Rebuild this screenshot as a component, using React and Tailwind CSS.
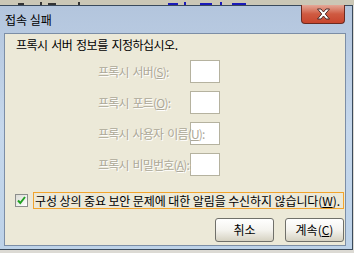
import { useState } from "react";

const font = { fontFamily: '"Noto Sans CJK KR", "Noto Sans", sans-serif' };

function ProxyRow({ label, hotkey }) {
  return (
    <div className="flex items-center h-[23px] pl-[93px]">
      <span className="relative z-10 w-[92px] shrink-0 whitespace-nowrap text-[12px] leading-[16px] tracking-[-0.8px] [word-spacing:2px] text-[#aca899] [text-shadow:1px_1px_0_#ffffff]">
        {label}(<span className="underline">{hotkey}</span>):
      </span>
      <div className="w-[30px] h-[23px] shrink-0 bg-white border border-[#b5b29f]" />
    </div>
  );
}

function App() {
  const [ignore, setIgnore] = useState(true);

  return (
    <div className="w-[354px] h-[253px] overflow-hidden bg-[#dcdad4]" style={font}>
      {/* dimmed window behind the dialog: only the feet of its letters show */}
      <div className="h-[5px] flex items-end bg-[#cbc7b6]">
        <div className="h-[2px] w-[6px] ml-[18px] bg-[#333]" />
        <div className="h-[3px] w-[2px] ml-[16px] bg-[#333]" />
        <div className="h-[2px] w-[8px] ml-[6px] bg-[#333]" />
        <div className="h-[3px] w-[2px] ml-[22px] bg-[#333]" />
        <div className="h-[2px] w-[10px] ml-[88px] bg-[#1a1ab8]" />
        <div className="h-[3px] w-[2px] ml-[6px] bg-[#1a1ab8]" />
        <div className="h-[2px] w-[12px] ml-[14px] bg-[#1a1ab8]" />
        <div className="h-[3px] w-[2px] ml-[8px] bg-[#1a1ab8]" />
        <div className="h-[2px] w-[14px] ml-[10px] bg-[#1a1ab8]" />
      </div>

      {/* dialog window */}
      <div className="w-[353px] h-[245px] flex flex-col border-t border-r border-b border-[#3a4a5c] bg-gradient-to-b from-[#b3c5dd] via-[#c6d8ec] to-[#bdd2e8]">
        {/* title bar */}
        <div className="h-[27px] flex items-start justify-between shrink-0">
          <span className="pl-[5px] pt-[6px] text-[12px] leading-[16px] text-black">접속 실패</span>
          <button className="-mt-[1px] mr-[7px] w-[44px] h-[19px] flex items-center justify-center rounded-b-[4px] border border-t-0 border-[#6b2a20] bg-gradient-to-b from-[#e3a797] via-[#cf5a41] to-[#c8452d]">
            <svg width="15" height="12" viewBox="0 0 15 12">
              <path
                d="M1.5 1h3.5l2.5 3 2.5-3h3.5l-4.2 5 4.2 5h-3.5l-2.5-3-2.5 3h-3.5l4.2-5z"
                fill="#ffffff"
                stroke="#4a2a2a"
                strokeWidth="1"
                strokeLinejoin="round"
              />
            </svg>
          </button>
        </div>

        {/* client area */}
        <div className="ml-[4px] w-[342px] h-[213px] flex flex-col border border-[#7c8ea6] bg-[#ece9d8] text-[12px] leading-[16px] text-black">
          <p className="pl-[11px] pt-[3px] tracking-[-0.5px] [word-spacing:1.5px]">프록시 서버 정보를 지정하십시오.</p>

          <div className="mt-[7px] flex flex-col gap-[8px]">
            <ProxyRow label="프록시 서버" hotkey="S" />
            <ProxyRow label="프록시 포트" hotkey="O" />
            <ProxyRow label="프록시 사용자 이름" hotkey="U" />
            <ProxyRow label="프록시 비밀번호" hotkey="A" />
          </div>

          <div className="mt-[16px] pl-[10px] flex items-center h-[17px]">
            <button
              onClick={() => setIgnore(!ignore)}
              className="w-[13px] h-[13px] shrink-0 flex items-center justify-center border border-[#8c8e8c] bg-gradient-to-br from-[#dcdcd6] to-white"
            >
              {ignore && (
                <svg width="9" height="9" viewBox="0 0 9 9">
                  <path d="M1 4.5l2.3 2.5 4.7-6" fill="none" stroke="#21a121" strokeWidth="2" />
                </svg>
              )}
            </button>
            <span className="ml-[5px] h-[17px] pl-[1px] pr-[3px] flex items-center border border-[#f2a42d] whitespace-nowrap tracking-[-0.1px]">
              구성 상의 중요 보안 문제에 대한 알림을 수신하지 않습니다(<span className="underline">W</span>).
            </span>
          </div>

          <div className="mt-[9px] pr-[1px] flex justify-end gap-[11px]">
            <button className="w-[59px] h-[24px] rounded-[3px] border border-[#70706a] bg-gradient-to-b from-white via-[#f4f3ee] to-[#d6d2c2] text-[12px]">
              취소
            </button>
            <button className="w-[59px] h-[24px] rounded-[3px] border border-[#70706a] bg-gradient-to-b from-white via-[#f4f3ee] to-[#d6d2c2] text-[12px]">
              계속(<span className="underline">C</span>)
            </button>
          </div>
        </div>
      </div>
    </div>
  );
}

export default App;
